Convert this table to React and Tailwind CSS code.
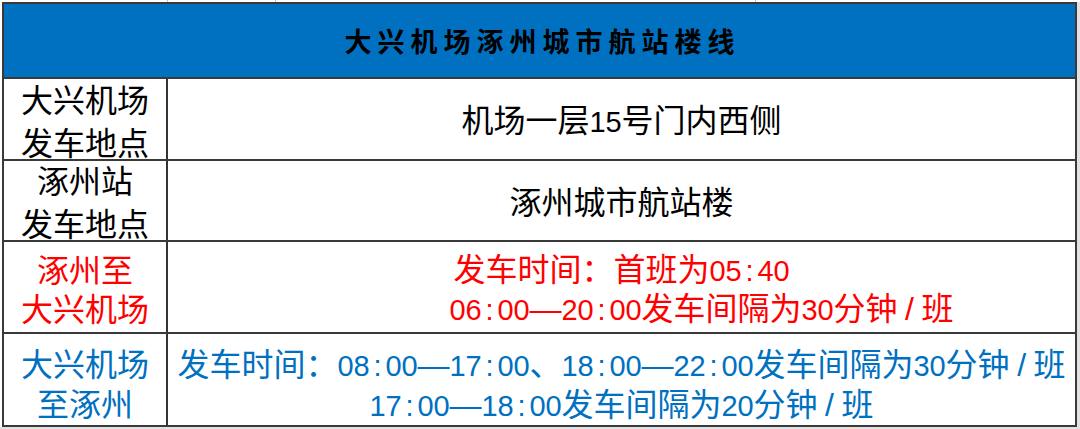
import React from "react";

// SimHei-like metrics: CJK chars 1em, digits and colon half width
const Txt = ({ text }) => {
  return text.split("").map((ch, i) => {
    if (/[0-9:]/.test(ch)) {
      return (
        <span key={i} className="inline-block w-[16px] text-center text-[29px]">
          {ch}
        </span>
      );
    }
    if (ch === "/") {
      return (
        <span key={i} className="inline-block w-[24px] text-center">
          {ch}
        </span>
      );
    }
    return <span key={i}>{ch}</span>;
  });
};

const Row = ({ height, color, labels, labelLeading, children }) => {
  return (
    <div className={`flex border-t-2 border-[#3a3a3a] ${height}`}>
      <div
        className={`flex w-[164px] shrink-0 flex-col items-center justify-center border-r-2 border-[#333] pt-[7px] ${color} ${labelLeading}`}
      >
        {labels.map((l) => (
          <div key={l} className="whitespace-nowrap">
            {l}
          </div>
        ))}
      </div>
      <div className={`flex flex-1 flex-col items-center justify-center pt-[5px] ${color}`}>
        {children}
      </div>
    </div>
  );
};

const App = () => {
  return (
    <div className="h-[429px] w-[1080px] overflow-hidden bg-white font-['Liberation_Sans','Noto_Sans_CJK_SC',sans-serif] text-[32px]">
      {/* excel grid above the table */}
      <div className="flex h-[2px]">
        <div className="w-[168px] border-r border-[#c6c6c6]" />
        <div className="w-[108px] border-r border-[#c6c6c6]" />
        <div className="w-[480px] border-r border-[#c6c6c6]" />
      </div>

      <div className="flex">
        <div className="ml-[2px] w-[1075px] shrink-0 border-2 border-[#3a3a3a]">
          {/* title */}
          <div className="flex h-[73px] items-center justify-center bg-[#0070c0] pt-[5px] pl-[6px]">
            <h1 className="text-[27px] font-bold tracking-[6px] text-black">
              大兴机场涿州城市航站楼线
            </h1>
          </div>

          <Row
            height="h-[82px]"
            color="text-black"
            labels={["大兴机场", "发车地点"]}
            labelLeading="leading-[43px]"
          >
            <div className="whitespace-nowrap leading-[40px]">
              <Txt text="机场一层15号门内西侧" />
            </div>
          </Row>

          <Row
            height="h-[81px]"
            color="text-black"
            labels={["涿州站", "发车地点"]}
            labelLeading="leading-[43px]"
          >
            <div className="whitespace-nowrap leading-[40px]">涿州城市航站楼</div>
          </Row>

          <Row
            height="h-[92px]"
            color="text-[#ff0000]"
            labels={["涿州至", "大兴机场"]}
            labelLeading="leading-[39px]"
          >
            <div className="whitespace-nowrap leading-[38px]">
              <Txt text="发车时间：首班为05:40" />
            </div>
            <div className="whitespace-nowrap pl-[160px] leading-[38px]">
              <Txt text="06:00—20:00发车间隔为30分钟/班" />
            </div>
          </Row>

          <div className="flex h-[93px] border-t-2 border-[#3a3a3a]">
            <div className="flex w-[164px] shrink-0 flex-col items-center justify-center border-r-2 border-[#333] pt-[10px] leading-[40px] text-[#0070c0]">
              <div className="whitespace-nowrap">大兴机场</div>
              <div className="whitespace-nowrap">至涿州</div>
            </div>
            <div className="flex flex-1 flex-col items-center justify-center pt-[12px] text-[#0070c0]">
              <div className="whitespace-nowrap leading-[39px]">
                <Txt text="发车时间：08:00—17:00、18:00—22:00发车间隔为30分钟/班" />
              </div>
              <div className="whitespace-nowrap leading-[39px]">
                <Txt text="17:00—18:00发车间隔为20分钟/班" />
              </div>
            </div>
          </div>
        </div>
        <div className="flex-1 bg-[#e2e2e2]" />
      </div>
      <div className="h-[2px] bg-[#e2e2e2]" />
    </div>
  );
};

export default App;
